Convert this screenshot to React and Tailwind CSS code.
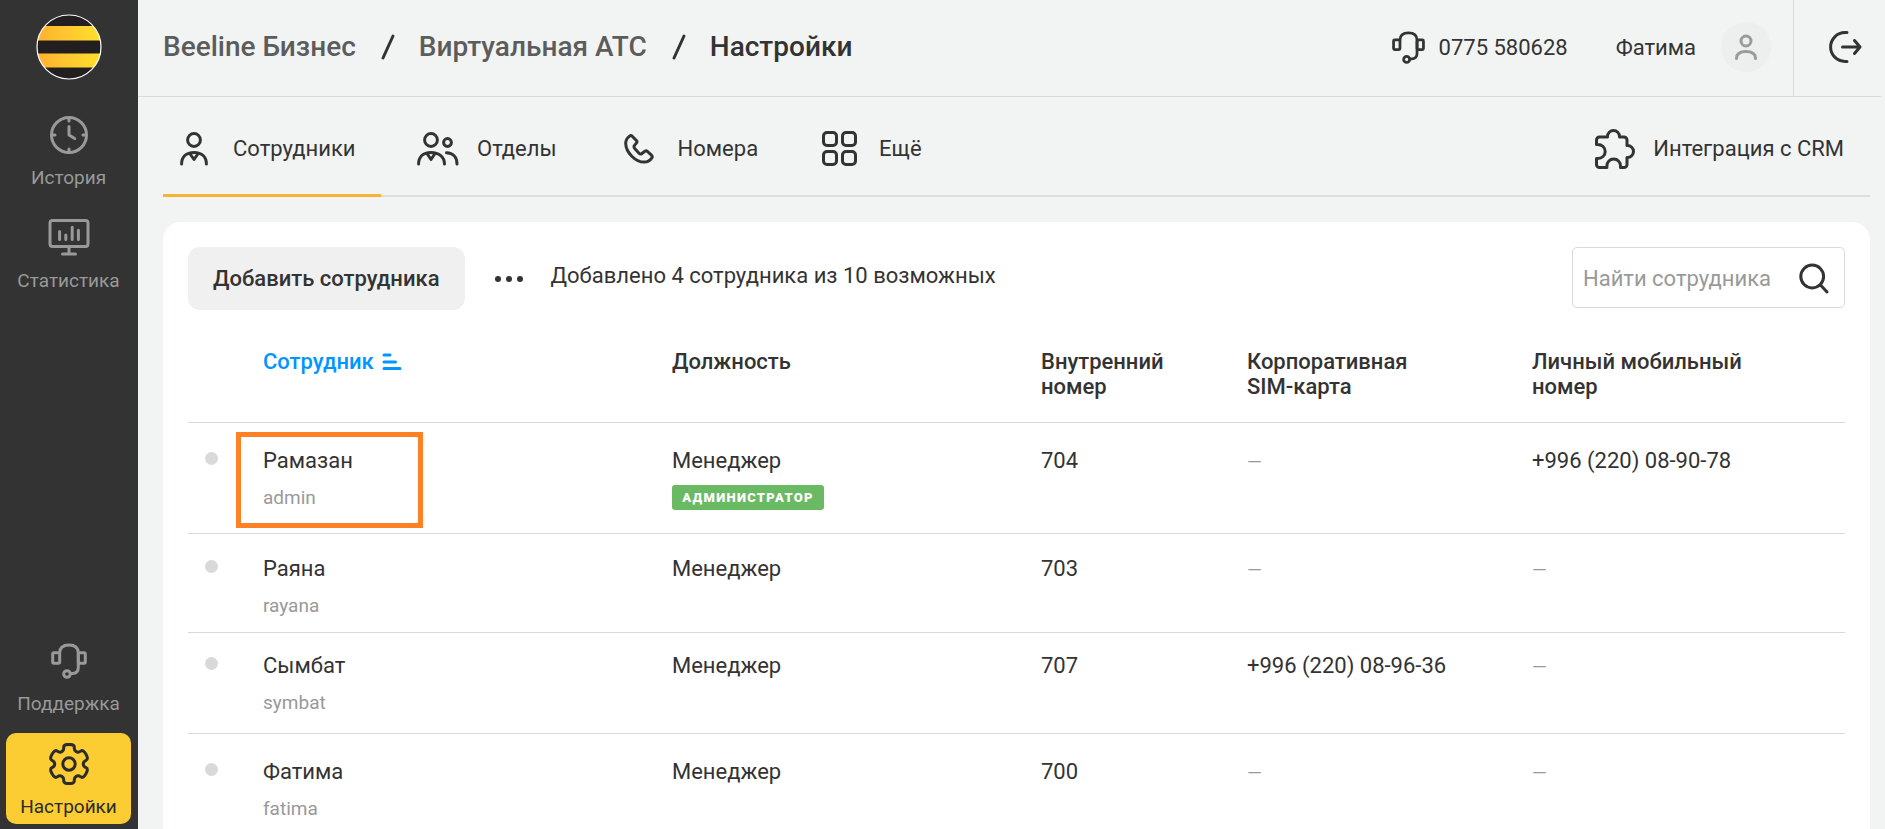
import React from 'react';

const Icon = ({ w, h, size, children, className = '' }) => (
  <svg
    width={size || w}
    height={size || h}
    viewBox={`0 0 ${w} ${h}`}
    fill="none"
    stroke="currentColor"
    strokeWidth="3"
    strokeLinecap="round"
    strokeLinejoin="round"
    aria-hidden="true"
    className={`shrink-0 ${className}`}
  >
    {children}
  </svg>
);

const ClockIcon = () => (
  <Icon w={38} h={38}>
    <circle cx="19" cy="19" r="17.5" />
    <path d="M19 10.5V19l5.7 3.6M19 2v3M19 33v3M2 19h3M33 19h3" />
  </Icon>
);

const StatsIcon = () => (
  <Icon w={42} h={38}>
    <rect x="2" y="1.5" width="38" height="26" rx="2.5" />
    <path d="M11.6 12.5v8M17.8 16v4.5M24.2 8.3v12.2M30.4 11.2v9.3M21 28v6.5M14.5 35h13" />
  </Icon>
);

const HeadsetIcon = ({ size }) => (
  <Icon w={36} h={36} size={size}>
    <rect x="1.7" y="9.7" width="7" height="10.6" rx="1.2" />
    <rect x="27.3" y="9.7" width="7" height="10.6" rx="1.2" />
    <path d="M8.7 10C8.7 4.6 12 2 18 2s9.3 2.6 9.3 8v14.5c0 3.6-2.2 5.8-6 6h-2" />
    <circle cx="16" cy="31" r="3.3" />
  </Icon>
);

// Six rounded teeth, each one described by four control points
const gearPath = () => {
  const pts = [];
  for (let i = 0; i < 6; i++) {
    const mid = i * 60 - 90;
    [[14.5, -20], [20.4, -16], [20.4, 16], [14.5, 20]].forEach(([r, a]) => {
      const t = ((mid + a) * Math.PI) / 180;
      pts.push([20 + r * Math.cos(t), 21 + r * Math.sin(t)]);
    });
  }
  const half = (a, b) => `${((a[0] + b[0]) / 2).toFixed(2)} ${((a[1] + b[1]) / 2).toFixed(2)}`;
  const start = half(pts[pts.length - 1], pts[0]);
  const curves = pts.map((p, i) => `Q${p[0].toFixed(2)} ${p[1].toFixed(2)} ${half(p, pts[(i + 1) % pts.length])}`);
  return `M${start}${curves.join('')}Z`;
};

const GearIcon = () => (
  <Icon w={40} h={42}>
    <path d={gearPath()} />
    <circle cx="20" cy="21" r="6.2" />
  </Icon>
);

const EmployeeIcon = () => (
  <Icon w={28} h={34}>
    <circle cx="14" cy="8" r="6.4" />
    <path d="M1.6 32C1.6 25 6 20.4 14 20.4S26.4 25 26.4 32" />
    <path d="M9.8 21.5L14 27.5l4.2-6" />
  </Icon>
);

const TeamIcon = () => (
  <Icon w={42} h={34}>
    <circle cx="14" cy="8" r="6.4" />
    <circle cx="30.5" cy="10.5" r="3.9" />
    <path d="M1.6 32C1.6 25 6 20.4 14 20.4S27.5 25 27.5 32" />
    <path d="M10 21.5l4 6 4-6M29.5 20.7c6.2.2 10.5 4 10.5 11.3" />
  </Icon>
);

const PhoneIcon = () => (
  <Icon w={30} h={30}>
    <path d="M8.2 2.2l4.2 4.3c.7.7.7 1.6.1 2.4l-2 2.5c-.7.9-.6 2 .2 3l4.3 4.8c.8.8 2 1 2.9.3l3-2.3c.7-.5 1.7-.5 2.4.1l4.2 3.9c.8.8.9 2 .2 2.9-1.8 2.6-4.6 4-7.6 4C11.5 28.1 2 18.5 1.7 9.6 1.6 6.8 3 4 5.6 2.1c.8-.6 1.9-.6 2.6.1z" />
  </Icon>
);

const GridIcon = () => (
  <Icon w={35} h={35}>
    <rect x="1.5" y="1.5" width="13" height="13" rx="3.5" />
    <rect x="20.5" y="1.5" width="13" height="13" rx="3.5" />
    <rect x="1.5" y="20.5" width="13" height="13" rx="3.5" />
    <rect x="20.5" y="20.5" width="13" height="13" rx="3.5" />
  </Icon>
);

const PuzzleIcon = () => (
  <Icon w={40} h={40}>
    <path d="M12.5 8V7.5a6 6 0 0 1 12 0V8H29a3 3 0 0 1 3 3v5.5h.5a6 6 0 0 1 0 12H32V35.5a3 3 0 0 1-3 3h-3.5v-1.5c0-4-3-7-6.8-7s-6.8 3-6.8 7v1.5H4.5a3 3 0 0 1-3-3V29.5h1.2c4.3 0 7.5-3 7.5-7s-3.2-7-7.5-7H1.5V11a3 3 0 0 1 3-3z" />
  </Icon>
);

const LogoutIcon = () => (
  <Icon w={33} h={32}>
    <path d="M18 1.6h-2A14.4 14.4 0 0 0 16 30.4h2" />
    <path d="M13.5 16H31M25.5 9.5L31 16l-5.5 6.5" />
  </Icon>
);

const SearchIcon = () => (
  <Icon w={30} h={32}>
    <circle cx="13.2" cy="14.5" r="11.4" />
    <path d="M21.5 23l6.5 7" />
  </Icon>
);

const Slash = () => (
  <Icon w={14} h={26} className="mr-6 ml-[25px]">
    <path d="M2 24L12 2" />
  </Icon>
);

const Logo = () => (
  <svg width="66" height="66" viewBox="0 0 66 66" role="img" aria-label="Beeline">
    <defs>
      <linearGradient id="stripe" x1="0" x2="1" y1="0" y2="0">
        <stop offset="0" stopColor="#ffb030" />
        <stop offset="1" stopColor="#ffe12d" />
      </linearGradient>
      <clipPath id="disc">
        <circle cx="33" cy="33" r="32" />
      </clipPath>
    </defs>
    <g clipPath="url(#disc)">
      <rect width="66" height="66" fill="#231f20" />
      <rect y="12" width="66" height="14.5" fill="url(#stripe)" />
      <rect y="39.5" width="66" height="14" fill="url(#stripe)" />
    </g>
    <circle cx="33" cy="33" r="32" fill="none" stroke="#fff" strokeWidth="1.2" />
  </svg>
);

const SidebarLink = ({ icon, label, active }) => (
  <a
    href="#"
    className={`mr-[7px] ml-[6px] flex flex-col items-center rounded-[10px] text-[19px] leading-6 ${
      active ? 'bg-[#fccc33] text-[#2b2b2b]' : 'text-[#999]'
    }`}
  >
    <span className="flex h-[62px] items-center">{icon}</span>
    <span className="pb-[5px]">{label}</span>
  </a>
);

const tabs = [
  { label: 'Сотрудники', icon: <EmployeeIcon />, style: 'w-[218px] pl-[17px] gap-[25px]', active: true },
  { label: 'Отделы', icon: <TeamIcon />, style: 'pl-9 gap-[18px]' },
  { label: 'Номера', icon: <PhoneIcon />, style: 'pl-[67px] gap-6' },
  { label: 'Ещё', icon: <GridIcon />, style: 'pl-16 gap-[22px]' },
];

const employees = [
  { name: 'Рамазан', login: 'admin', ext: '704', sim: null, mobile: '+996 (220) 08-90-78', admin: true, pad: 'pt-[25px] pb-[23px]', marked: true },
  { name: 'Раяна', login: 'rayana', ext: '703', sim: null, mobile: null, pad: 'pt-[22px] pb-[14px]' },
  { name: 'Сымбат', login: 'symbat', ext: '707', sim: '+996 (220) 08-96-36', mobile: null, pad: 'pt-5 pb-[18px]' },
  { name: 'Фатима', login: 'fatima', ext: '700', sim: null, mobile: null, pad: 'pt-[25px] pb-1' },
];

const Value = ({ children }) => (children ? children : <span className="text-[19px] text-[#999]">—</span>);

const EmployeeRow = ({ employee }) => {
  const { name, login, ext, sim, mobile, admin, pad, marked } = employee;
  return (
    <tr className="border-b border-[#d9d9d9] align-top last:border-b-0">
      <td className={pad}>
        <span className="mt-1 ml-[17px] block h-[13px] w-[13px] rounded-full bg-[#d9d9d9]" />
      </td>
      <td className={`relative ${pad}`}>
        {marked && <span className="absolute top-[9px] -left-[27px] h-24 w-[187px] border-[5px] border-[#ff8126]" />}
        <div>{name}</div>
        <div className="mt-3 text-[19px] leading-[25px] text-[#999]">{login}</div>
      </td>
      <td className={pad}>
        <div>Менеджер</div>
        {admin && (
          <span className="mt-3 flex h-[25px] w-[152px] items-center justify-center rounded-[3px] bg-[#6aba63] text-[13px] font-black tracking-widest text-white">
            АДМИНИСТРАТОР
          </span>
        )}
      </td>
      <td className={pad}>{ext}</td>
      <td className={pad}><Value>{sim}</Value></td>
      <td className={pad}><Value>{mobile}</Value></td>
    </tr>
  );
};

const App = () => {
  return (
    <div className="flex min-h-screen bg-[#f1f4f3] font-['Roboto',sans-serif] text-[22px] leading-[25px] text-[#333]">
      <aside className="flex w-[138px] shrink-0 flex-col bg-[#333] pb-[5px]">
        <a href="#" className="mt-[14px] flex justify-center">
          <Logo />
        </a>
        <nav className="mt-6 flex flex-1 flex-col gap-[12px]">
          <SidebarLink icon={<ClockIcon />} label="История" />
          <SidebarLink icon={<StatsIcon />} label="Статистика" />
          <div className="mt-auto flex flex-col gap-[12px]">
            <SidebarLink icon={<HeadsetIcon size={36} />} label="Поддержка" />
            <SidebarLink icon={<GearIcon />} label="Настройки" active />
          </div>
        </nav>
      </aside>

      <div className="flex min-w-0 flex-1 flex-col">
        <header className="mr-1 flex h-[97px] items-stretch border-b border-[#d9d9d9] pl-[25px]">
          <nav className="flex flex-1 items-center pb-[3px] text-[28px] leading-8 font-medium">
            <a href="#" className="text-[#5c5c5c]">Beeline Бизнес</a>
            <Slash />
            <a href="#" className="text-[#5c5c5c]">Виртуальная АТС</a>
            <Slash />
            <span>Настройки</span>
          </nav>
          <div className="flex items-center pr-[22px] pb-[2px]">
            <HeadsetIcon size={33} />
            <a href="#" className="ml-[14px]">0775 580628</a>
            <span className="ml-12">Фатима</span>
            <button type="button" aria-label="Профиль" className="ml-[25px] flex h-[50px] w-[50px] items-center justify-center rounded-full bg-[#edeeee] text-[#9b9b9b]">
              <Icon w={24} h={28}>
                <circle cx="12" cy="8" r="5" />
                <path d="M2.5 25.5c0-4.5 3.5-7 9.5-7s9.5 2.5 9.5 7" />
              </Icon>
            </button>
          </div>
          <button type="button" aria-label="Выйти" className="flex w-[88px] items-center border-l border-[#d9d9d9] pb-[2px] pl-[35px]">
            <LogoutIcon />
          </button>
        </header>

        <main className="flex flex-1 flex-col pr-[15px] pl-[25px]">
          <div className="flex h-[100px] border-b-2 border-[#dcdede]">
            {tabs.map((tab) => (
              <a
                key={tab.label}
                href="#"
                className={`-mb-[2px] flex items-center border-b-[3px] pt-[6px] ${tab.style} ${tab.active ? 'border-[#fbb231]' : 'border-transparent'}`}
              >
                {tab.icon}
                {tab.label}
              </a>
            ))}
            <a href="#" className="ml-auto flex items-center gap-[18px] pt-[5px] pr-[26px]">
              <PuzzleIcon />
              Интеграция с CRM
            </a>
          </div>

          <section className="mt-[25px] flex-1 rounded-t-[18px] bg-white px-[25px] pt-[25px]">
            <div className="flex h-[63px] items-start">
              <button type="button" className="h-[63px] rounded-xl bg-[#f0f0f0] px-[25px] font-medium">
                Добавить сотрудника
              </button>
              <button type="button" aria-label="Действия" className="ml-[30px] flex h-[63px] items-center gap-[5px]">
                <span className="h-[6px] w-[6px] rounded-full bg-[#333]" />
                <span className="h-[6px] w-[6px] rounded-full bg-[#333]" />
                <span className="h-[6px] w-[6px] rounded-full bg-[#333]" />
              </button>
              <p className="mt-4 ml-7">Добавлено 4 сотрудника из 10 возможных</p>
              <label className="ml-auto flex h-[61px] w-[273px] items-center justify-between rounded-[5px] border border-[#d9d9d9] pt-[1px] pr-[15px] pl-[10px]">
                <input
                  type="text"
                  aria-label="Найти сотрудника"
                  placeholder="Найти сотрудника"
                  className="w-[200px] bg-transparent outline-none placeholder:text-[#999]"
                />
                <SearchIcon />
              </label>
            </div>

            <table className="mt-[39px] w-full table-fixed border-collapse text-left">
              <thead>
                <tr className="border-b border-[#d9d9d9] align-top">
                  <th className="w-[75px]" />
                  <th className="w-[409px] font-medium text-[#0095ff]">
                    <button type="button" className="flex items-center gap-2">
                      Сотрудник
                      <Icon w={20} h={18}>
                        <path d="M2 2h6M2 9h11.5M2 15.5h16" />
                      </Icon>
                    </button>
                  </th>
                  <th className="w-[369px] font-medium">Должность</th>
                  <th className="w-[206px] pb-[23px] font-medium">Внутренний<br />номер</th>
                  <th className="w-[285px] font-medium">Корпоративная<br />SIM-карта</th>
                  <th className="w-[313px] font-medium">Личный мобильный<br />номер</th>
                </tr>
              </thead>
              <tbody>
                {employees.map((employee) => (
                  <EmployeeRow key={employee.login} employee={employee} />
                ))}
              </tbody>
            </table>
          </section>
        </main>
      </div>
    </div>
  );
};

export default App;
